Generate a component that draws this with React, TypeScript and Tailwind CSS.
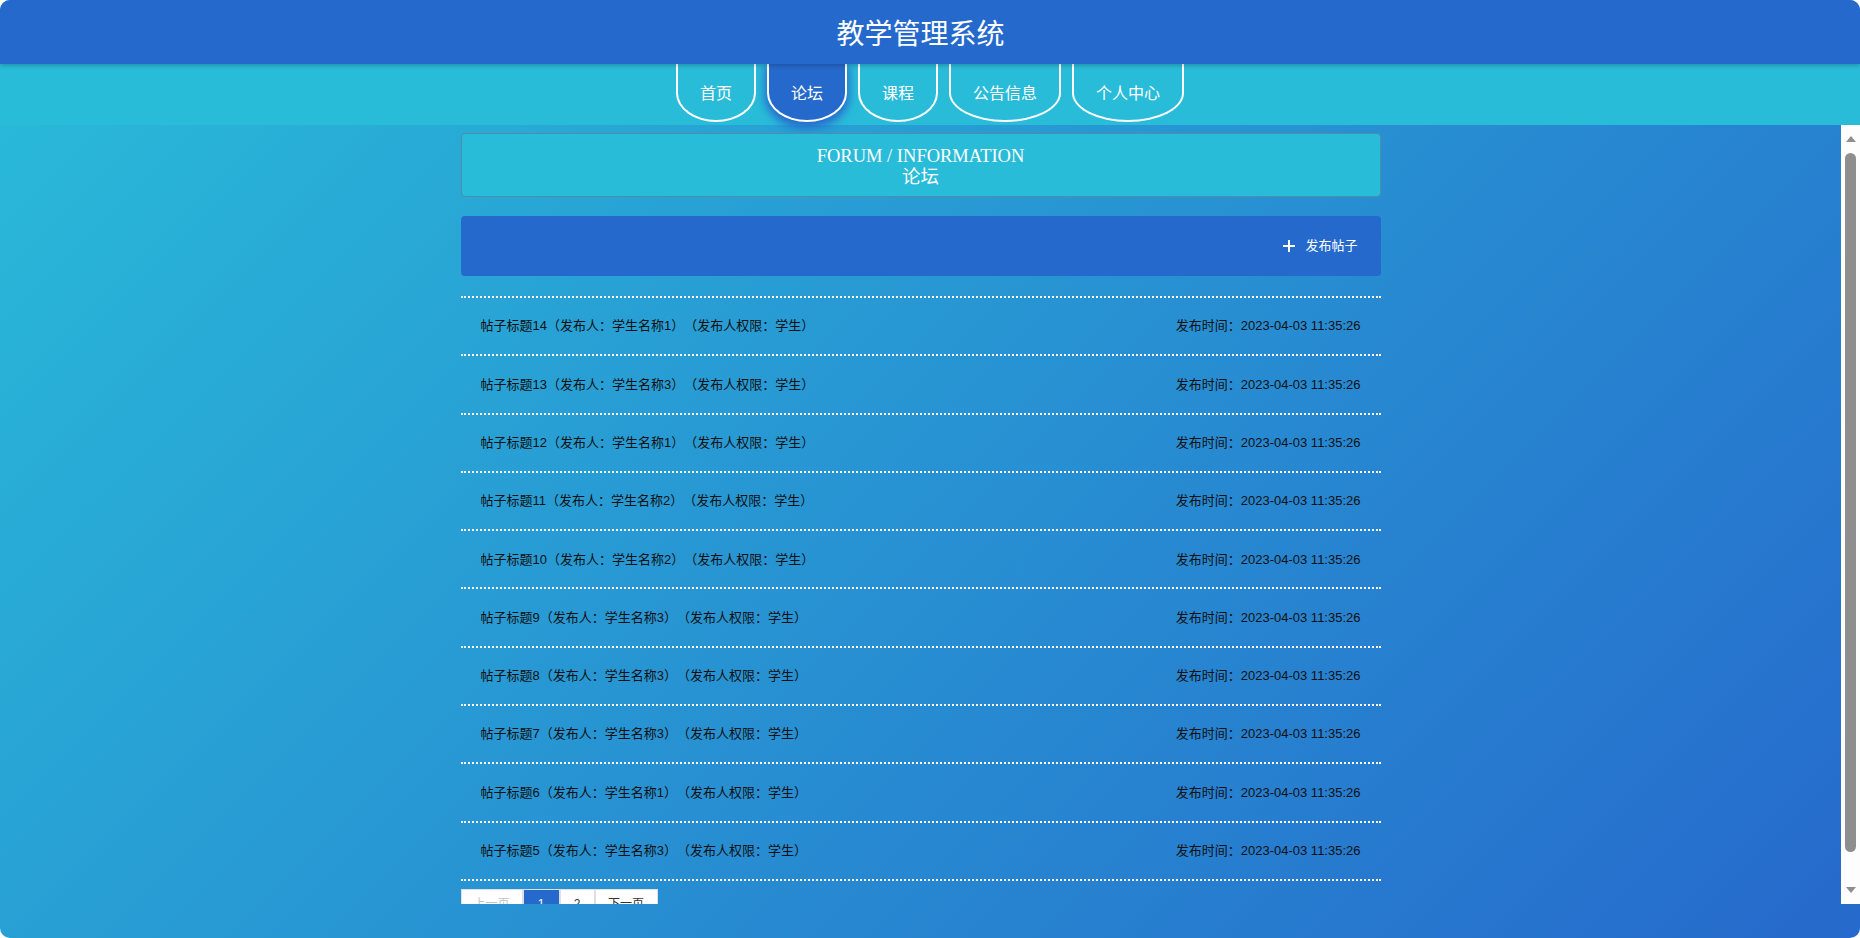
import type { ReactNode } from "react"

const posts = [
  { id: 14, author: "学生名称1" },
  { id: 13, author: "学生名称3" },
  { id: 12, author: "学生名称1" },
  { id: 11, author: "学生名称2" },
  { id: 10, author: "学生名称2" },
  { id: 9, author: "学生名称3" },
  { id: 8, author: "学生名称3" },
  { id: 7, author: "学生名称3" },
  { id: 6, author: "学生名称1" },
  { id: 5, author: "学生名称3" },
]

const tabs = ["首页", "论坛", "课程", "公告信息", "个人中心"]

function NavTab({ label, active }: { label: string; active?: boolean }) {
  return (
    <div
      className={
        active
          ? "flex h-[58px] items-center rounded-b-[50%] border-x-2 border-b-2 border-white bg-[#2669cc] px-[22px] shadow-[0_4px_10px_2px_#2669cc]"
          : "flex h-[58px] items-center rounded-b-[50%] border-x-2 border-b-2 border-white px-[22px]"
      }
    >
      <span className="text-[16px] leading-none text-white">{label}</span>
    </div>
  )
}

function PageButton({ children, className }: { children: ReactNode; className: string }) {
  return (
    <div className={"flex h-[30px] items-center justify-center border border-[#dcdfe6] text-[12px] " + className}>
      {children}
    </div>
  )
}

// drawn scrollbar, the headless browser hides the native one
function ScrollBar() {
  return (
    <div className="flex w-[19px] shrink-0 flex-col items-center bg-[#fdfdfd]">
      <div className="flex h-[28px] items-center justify-center">
        <svg width="10" height="6" viewBox="0 0 10 6">
          <polygon points="5,0 10,6 0,6" fill="#8e8e8e" />
        </svg>
      </div>
      <div className="h-[699px] w-[11px] rounded-full bg-[#8e8e8e]" />
      <div className="flex-1" />
      <div className="flex h-[28px] items-center justify-center">
        <svg width="10" height="6" viewBox="0 0 10 6">
          <polygon points="0,0 10,0 5,6" fill="#8e8e8e" />
        </svg>
      </div>
    </div>
  )
}

export default function App() {
  return (
    <div className="h-[938px] w-full bg-white font-['Liberation_Sans','Noto_Sans_CJK_SC',sans-serif]">
      <div className="flex h-[938px] flex-col overflow-hidden rounded-[10px] bg-[linear-gradient(135deg,#29bcd9,#2669cc)]">
        <header className="relative z-10 flex h-16 shrink-0 items-center justify-center bg-[#2669cc] pr-[19px] shadow-[0_2px_4px_rgba(0,0,0,0.2)]">
          <h1 className="font-['Noto_Sans_CJK_SC',sans-serif] text-[28px] font-normal text-white">教学管理系统</h1>
        </header>

        <nav className="flex h-[61px] shrink-0 justify-center gap-[11px] bg-[#29bcd9] font-['Noto_Sans_CJK_SC',sans-serif]">
          {tabs.map((t) => (
            <NavTab key={t} label={t} active={t === "论坛"} />
          ))}
        </nav>

        <div className="flex h-[779px] shrink-0">
          <main className="flex-1 overflow-hidden">
            <div className="mx-auto w-[920px] pt-2 pb-[33px]">
              <div className="flex h-16 flex-col items-center justify-center rounded-[4px] border border-[#4f8ea6] bg-[#29bcd9] pt-[3px] font-['Liberation_Serif','Noto_Sans_CJK_SC',serif] text-[18.5px] leading-[21px] text-white">
                <div>FORUM / INFORMATION</div>
                <div>论坛</div>
              </div>

              <div className="mt-[19px] flex h-[60px] items-center justify-end rounded-[4px] bg-[#2669cc] pr-[23px]">
                <button className="flex items-center gap-[10px] text-[13px] text-white">
                  <svg width="12" height="12" viewBox="0 0 12 12">
                    <path d="M6 0v12M0 6h12" stroke="white" strokeWidth="2" />
                  </svg>
                  发布帖子
                </button>
              </div>

              <ul className="mt-5 border-t-2 border-dotted border-white">
                {posts.map((p) => (
                  <li
                    key={p.id}
                    className="flex h-[58.3px] items-center justify-between border-b-2 border-dotted border-white px-5 text-[13px] text-[#111] [text-spacing-trim:space-all]"
                  >
                    <span>
                      帖子标题{p.id}（发布人：{p.author}）（发布人权限：学生）
                    </span>
                    <span>发布时间：2023-04-03 11:35:26</span>
                  </li>
                ))}
              </ul>

              <div className="mt-2 flex">
                <PageButton className="w-[62px] bg-white text-[#c0c4cc]">上一页</PageButton>
                <PageButton className="w-[37px] border-[#2669cc] bg-[#2669cc] text-white">1</PageButton>
                <PageButton className="w-[35px] bg-white text-[#333]">2</PageButton>
                <PageButton className="w-[63px] bg-white text-[#333]">下一页</PageButton>
              </div>
            </div>
          </main>
          <ScrollBar />
        </div>
      </div>
    </div>
  )
}
